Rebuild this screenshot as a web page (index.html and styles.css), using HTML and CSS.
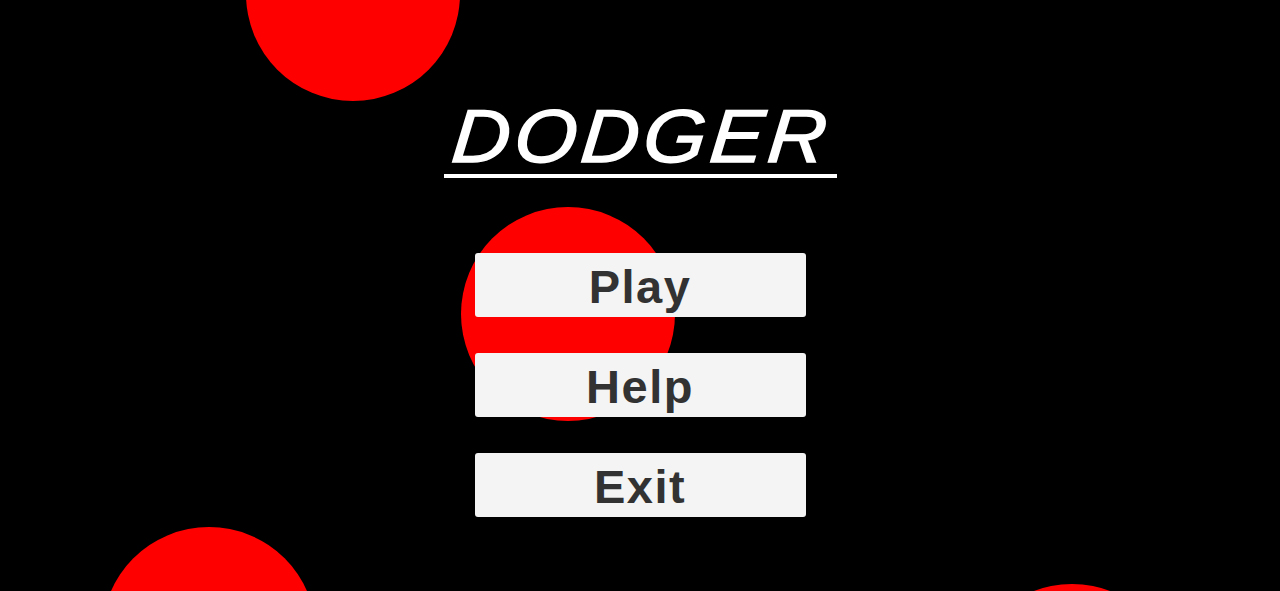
FILE: index.html
```html
<!DOCTYPE html>
<html>
<head>
<meta charset="utf-8">
<link rel="stylesheet" href="styles.css">
</head>
<body>
<div class="stage">
  <div class="ball b1"></div>
  <div class="ball b2"></div>
  <div class="ball b3"></div>
  <div class="ball b4"></div>
  <div class="menu">
    <div class="title-wrap">
      <h1 class="title">DODGER</h1>
      <div class="rule"></div>
    </div>
    <div class="buttons">
      <button class="btn">Play</button>
      <button class="btn">Help</button>
      <button class="btn">Exit</button>
    </div>
  </div>
</div>
</body>
</html>
```
FILE: styles.css
```css
html, body {
  margin: 0;
  padding: 0;
  background: #000;
}
.stage {
  position: relative;
  width: 1280px;
  height: 591px;
  overflow: hidden;
  background: #000;
}
.ball {
  position: absolute;
  width: 214px;
  height: 214px;
  border-radius: 50%;
  background: #ff0000;
}
.b1 { left: 246px; top: -113px; }
.b2 { left: 461px; top: 207px; }
.b3 { left: 102px; top: 527px; }
.b4 { left: 965px; top: 584px; }
.menu {
  position: relative;
  display: flex;
  flex-direction: column;
  align-items: center;
  padding-top: 96px;
}
.title-wrap {
  display: flex;
  flex-direction: column;
  align-items: center;
}
.title {
  margin: 0;
  font-family: "Liberation Sans", Arial, sans-serif;
  font-style: italic;
  font-weight: normal;
  font-size: 75px;
  line-height: 80px;
  letter-spacing: 4px;
  color: #fff;
  -webkit-text-stroke: 1.5px #fff;
  transform: scaleX(1.07) skewX(-5deg);
  padding-left: 4px;
}
.rule {
  width: 393px;
  height: 4px;
  background: #fff;
  margin-top: -2px;
}
.buttons {
  display: flex;
  flex-direction: column;
  gap: 36px;
  margin-top: 75px;
}
.btn {
  width: 331px;
  height: 64px;
  margin: 0;
  padding: 3px 0 0;
  border: none;
  border-radius: 3px;
  background: #f4f4f4;
  color: #323232;
  font-family: "Liberation Sans", Arial, sans-serif;
  font-weight: bold;
  font-size: 47px;
  letter-spacing: 1.5px;
  line-height: 61px;
  text-align: center;
}
```
